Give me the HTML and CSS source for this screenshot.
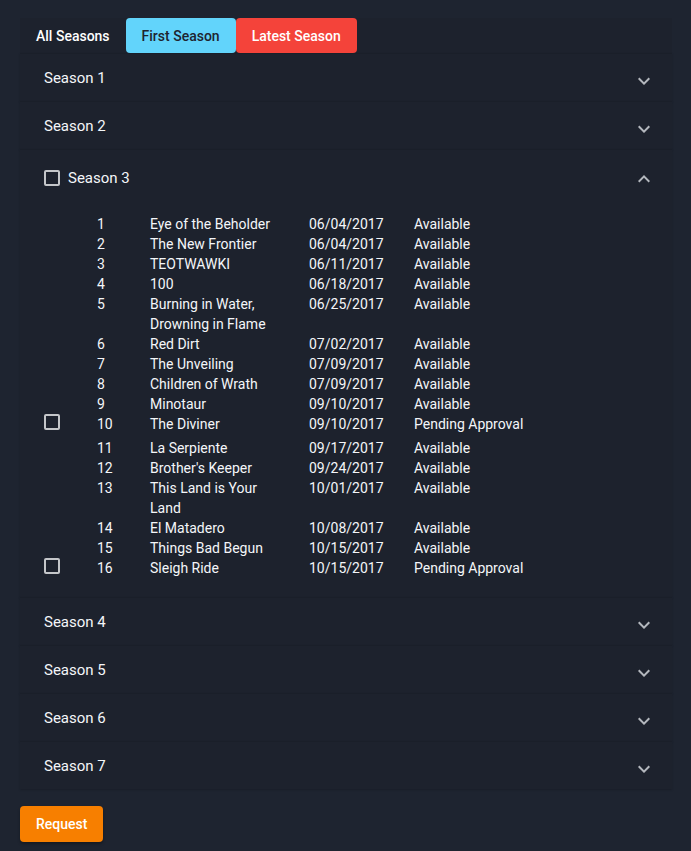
FILE: index.html
```html
<!DOCTYPE html>
<html>
<head>
<meta charset="utf-8">
<link rel="stylesheet" href="styles.css">
</head>
<body>
<div class="page">
  <div class="tabs">
    <span class="tab tab-all">All Seasons</span>
    <span class="tab tab-first">First Season</span>
    <span class="tab tab-latest">Latest Season</span>
  </div>

  <div class="panel">
    <div class="summary"><span class="label">Season 1</span><svg class="chev" viewBox="0 0 24 24"><path d="M16.59 8.59L12 13.17 7.41 8.59 6 10l6 6 6-6z"/></svg></div>
  </div>
  <div class="panel">
    <div class="summary"><span class="label">Season 2</span><svg class="chev" viewBox="0 0 24 24"><path d="M16.59 8.59L12 13.17 7.41 8.59 6 10l6 6 6-6z"/></svg></div>
  </div>
  <div class="panel">
    <div class="summary summary-open"><span class="box"></span><span class="label">Season 3</span><svg class="chev up" viewBox="0 0 24 24"><path d="M16.59 8.59L12 13.17 7.41 8.59 6 10l6 6 6-6z"/></svg></div>
    <div class="details">
      <table class="eps">
        <colgroup><col class="c-check"><col class="c-num"><col class="c-title"><col class="c-date"><col class="c-status"></colgroup>
        <tr><td></td><td>1</td><td>Eye of the Beholder</td><td>06/04/2017</td><td>Available</td></tr>
        <tr><td></td><td>2</td><td>The New Frontier</td><td>06/04/2017</td><td>Available</td></tr>
        <tr><td></td><td>3</td><td>TEOTWAWKI</td><td>06/11/2017</td><td>Available</td></tr>
        <tr><td></td><td>4</td><td>100</td><td>06/18/2017</td><td>Available</td></tr>
        <tr><td></td><td>5</td><td>Burning in Water, Drowning in Flame</td><td>06/25/2017</td><td>Available</td></tr>
        <tr><td></td><td>6</td><td>Red Dirt</td><td>07/02/2017</td><td>Available</td></tr>
        <tr><td></td><td>7</td><td>The Unveiling</td><td>07/09/2017</td><td>Available</td></tr>
        <tr><td></td><td>8</td><td>Children of Wrath</td><td>07/09/2017</td><td>Available</td></tr>
        <tr><td></td><td>9</td><td>Minotaur</td><td>09/10/2017</td><td>Available</td></tr>
        <tr class="pending"><td><span class="box"></span></td><td>10</td><td>The Diviner</td><td>09/10/2017</td><td>Pending Approval</td></tr>
        <tr><td></td><td>11</td><td>La Serpiente</td><td>09/17/2017</td><td>Available</td></tr>
        <tr><td></td><td>12</td><td>Brother's Keeper</td><td>09/24/2017</td><td>Available</td></tr>
        <tr><td></td><td>13</td><td>This Land is Your Land</td><td>10/01/2017</td><td>Available</td></tr>
        <tr><td></td><td>14</td><td>El Matadero</td><td>10/08/2017</td><td>Available</td></tr>
        <tr><td></td><td>15</td><td>Things Bad Begun</td><td>10/15/2017</td><td>Available</td></tr>
        <tr class="pending"><td><span class="box"></span></td><td>16</td><td>Sleigh Ride</td><td>10/15/2017</td><td>Pending Approval</td></tr>
      </table>
    </div>
  </div>
  <div class="panel">
    <div class="summary"><span class="label">Season 4</span><svg class="chev" viewBox="0 0 24 24"><path d="M16.59 8.59L12 13.17 7.41 8.59 6 10l6 6 6-6z"/></svg></div>
  </div>
  <div class="panel">
    <div class="summary"><span class="label">Season 5</span><svg class="chev" viewBox="0 0 24 24"><path d="M16.59 8.59L12 13.17 7.41 8.59 6 10l6 6 6-6z"/></svg></div>
  </div>
  <div class="panel">
    <div class="summary"><span class="label">Season 6</span><svg class="chev" viewBox="0 0 24 24"><path d="M16.59 8.59L12 13.17 7.41 8.59 6 10l6 6 6-6z"/></svg></div>
  </div>
  <div class="panel">
    <div class="summary"><span class="label">Season 7</span><svg class="chev" viewBox="0 0 24 24"><path d="M16.59 8.59L12 13.17 7.41 8.59 6 10l6 6 6-6z"/></svg></div>
  </div>

  <div class="actions">
    <span class="btn-request">Request</span>
  </div>
</div>
</body>
</html>
```

FILE: styles.css
```css
html, body {
  margin: 0;
  padding: 0;
  background: #1e2430;
}
body {
  font-family: Roboto, "Liberation Sans", sans-serif;
  font-size: 14px;
  color: #f2f4f7;
}
.page {
  padding: 18px 19px 0 20px;
  min-height: 851px;
  box-sizing: border-box;
}
.tabs {
  display: flex;
  height: 35px;
  background: #1d222d;
}
.tab {
  display: flex;
  align-items: center;
  padding: 0 16px;
  font-weight: 500;
  border-radius: 4px;
  line-height: 20px;
}
.tab-all { color: #ffffff; }
.tab-first { background: #62d4fb; color: #1e2430; }
.tab-latest { background: #f4433a; color: #ffffff; }

.panel {
  background: #1d222d;
  border-top: 1px solid #1a1f29;
  box-shadow: 0 1px 2px rgba(0,0,0,0.18);
}
.summary {
  display: flex;
  align-items: center;
  height: 47px;
  padding: 0 16px 0 24px;
}
.summary-open { height: 55px; }
.label {
  flex: 1;
  font-size: 15px;
  line-height: 20px;
  color: #f4f6f9;
}
.box {
  display: inline-block;
  width: 12px;
  height: 12px;
  border: 2px solid #c4c6c9;
  border-radius: 2px;
  margin-right: 8px;
}
.chev {
  width: 24px;
  height: 24px;
  fill: #b4b8be;
  transform: translateY(3px);
}
.chev.up { transform: rotate(180deg) translateY(-1px); }

.details {
  padding: 9px 24px 15px 24px;
}
.eps {
  border-collapse: collapse;
  table-layout: fixed;
  width: 530px;
}
.eps td {
  padding: 0;
  line-height: 20px;
  vertical-align: top;
  color: #f4f6f9;
}
.c-check { width: 53px; }
.c-num { width: 53px; }
.c-title { width: 159px; }
.c-date { width: 105px; }
.c-status { width: 160px; }
.eps td:nth-child(3) { padding-right: 22px; }
.eps tr.pending td { height: 24px; }
.eps tr.pending .box { margin: 0; vertical-align: top; }

.actions {
  padding-top: 17px;
}
.btn-request {
  display: inline-flex;
  align-items: center;
  height: 36px;
  padding: 0 16px;
  background: #f77f00;
  color: #ffffff;
  font-weight: 500;
  border-radius: 4px;
  box-shadow: 0 2px 3px rgba(0,0,0,0.3);
}
```
